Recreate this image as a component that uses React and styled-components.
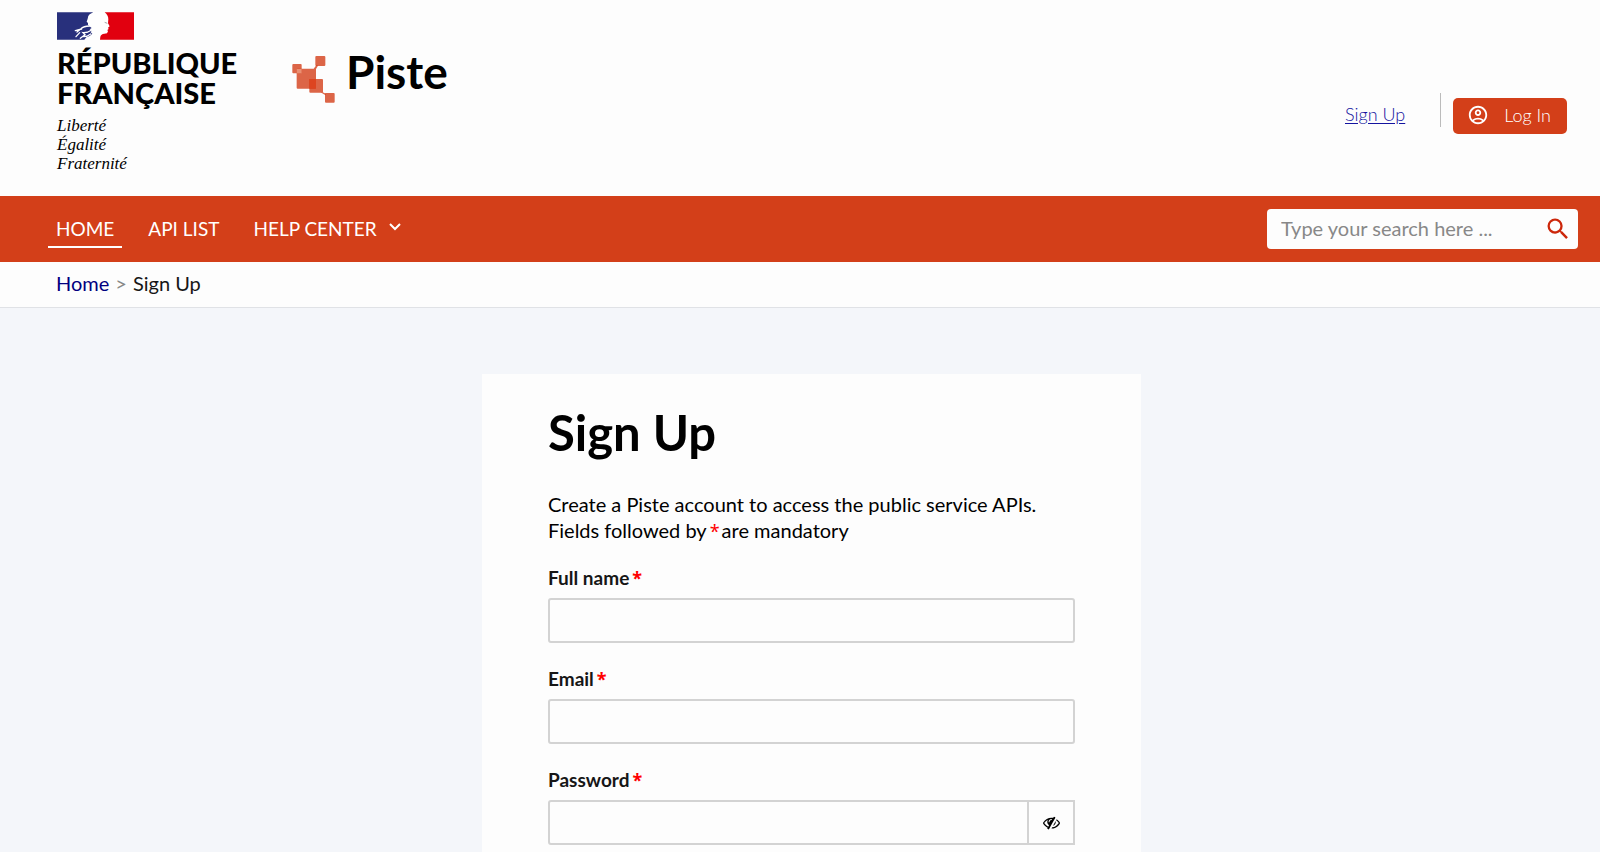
import React from "react";
import styled, { createGlobalStyle } from "styled-components";
import { MdSearch, MdOutlineAccountCircle } from "react-icons/md";

const GlobalStyle = createGlobalStyle`
  * { box-sizing: border-box; }
  body {
    margin: 0;
    background: #f4f6fa;
    color: #000;
    font-family: Lato, "Noto Sans", sans-serif;
    font-size: 20px;
    line-height: 26px;
  }
  input, button { font-family: inherit; font-size: inherit; }
`;

const Header = styled.header`
  display: flex;
  align-items: flex-start;
  height: 196px;
  padding: 12px 33px 0 57px;
  background: #fdfdfd;
`;

const Republic = styled.div`
  width: 235px;
  svg { display: block; }
`;

const RepublicName = styled.div`
  margin-top: 8px;
  font-size: 29px;
  font-weight: 900;
  line-height: 30px;
`;

const Motto = styled.div`
  margin-top: 8px;
  font-family: "Liberation Serif", serif;
  font-size: 17px;
  font-style: italic;
  font-weight: 400;
  line-height: 19px;
`;

const Brand = styled.a`
  display: flex;
  align-items: center;
  gap: 10px;
  margin-top: 29px;
  color: #000;
  font-size: 46px;
  font-weight: 700;
  line-height: 48px;
  text-decoration: none;
  svg { margin-top: 14px; }
`;

const Account = styled.div`
  display: flex;
  align-items: flex-start;
  margin: 81px 0 0 auto;
  font-size: 18px;
  font-weight: 300;
`;

const SignUpLink = styled.a`
  margin-top: 8px;
  padding-right: 35px;
  color: #1414a0;
  text-underline-offset: 2px;
`;

const Divider = styled.span`
  width: 1px;
  height: 34px;
  margin-right: 12px;
  background: #bbb;
`;

const LogIn = styled.button`
  display: flex;
  align-items: center;
  gap: 15px;
  height: 36px;
  margin-top: 5px;
  padding: 0 16px 2px 14px;
  border: 0;
  border-radius: 5px;
  background: #d33f19;
  color: #fff;
  font-weight: 300;
`;

const Nav = styled.nav`
  display: flex;
  align-items: center;
  height: 66px;
  padding: 0 22px 0 48px;
  gap: 18px;
  background: #d33f19;
`;

const NavLink = styled.a`
  display: flex;
  align-items: center;
  gap: 11px;
  height: 38px;
  padding: 1px 8px 0;
  border-bottom: 2px solid ${(p) => (p.$active ? "#fff" : "transparent")};
  color: #fff;
  font-size: 19px;
  text-decoration: none;
  svg { margin-top: -4px; }
`;

const Search = styled.form`
  display: flex;
  align-items: center;
  width: 311px;
  height: 40px;
  margin-left: auto;
  padding: 0 6px 0 14px;
  border-radius: 4px;
  background: #fdfdfd;
`;

const SearchInput = styled.input`
  flex: 1;
  min-width: 0;
  padding: 0 0 2px;
  border: 0;
  outline: 0;
  background: none;
  &::placeholder { color: #888; opacity: 1; }
`;

const IconButton = styled.button`
  display: flex;
  padding: 0;
  border: 0;
  background: none;
  color: #cc260a;
`;

const Breadcrumb = styled.nav`
  display: flex;
  gap: 6px;
  height: 46px;
  padding: 8px 56px;
  border-bottom: 1px solid #e0e2e6;
  background: #fdfdfd;
  color: #161616;
  a { color: #000080; text-decoration: none; }
  span { color: #888; }
`;

const Main = styled.main`
  display: flex;
  justify-content: center;
  padding: 66px 0 0 23px;
`;

const Card = styled.section`
  width: 659px;
  padding: 32px 66px 40px;
  background: #fdfdfd;
`;

const Title = styled.h1`
  margin: 0 0 33px;
  font-size: 49px;
  font-weight: 700;
  line-height: 52px;
`;

const Intro = styled.p`
  margin: 0 0 22px;
`;

const Star = styled.span`
  margin: 0 2px 0 3px;
  color: #f00;
  font-family: "Noto Sans", sans-serif;
  font-size: 18px;
  line-height: 20px;
`;

const Form = styled.form`
  display: flex;
  flex-direction: column;
  gap: 23px;
`;

const Field = styled.div``;

const Label = styled.label`
  display: block;
  height: 26px;
  margin-bottom: 7px;
  color: #161616;
  font-size: 19px;
  font-weight: 700;
`;

const Control = styled.div`
  display: flex;
  height: 45px;
  border: 2px solid #d3d3d3;
  border-radius: ${(p) => (p.$joined ? "3px 0 0 3px" : "3px")};
`;

const TextInput = styled.input`
  flex: 1;
  min-width: 0;
  padding: 0 12px;
  border: 0;
  outline: 0;
  background: none;
`;

const Reveal = styled.button`
  display: flex;
  align-items: center;
  justify-content: center;
  width: 46px;
  padding: 0;
  border: 0;
  border-left: 2px solid #d3d3d3;
  background: none;
`;

const Flag = () => (
  <svg width="77" height="28" viewBox="0 0 231 84" aria-hidden="true">
    <rect width="231" height="84" fill="#fff" />
    <path fill="#28307c" d="M0 1H109L98 7Q91 13 92 20L89 29L93 33L93 38Q98 44 104 48L98 52L104 56L101 61L106 65L98 72L88 76L82 83H0Z" />
    <path fill="none" stroke="#fff" strokeWidth="4" strokeLinecap="round" d="M98 42Q80 42 71 51L60 60M74 51L55 56M68 62L57 74M104 54Q91 63 78 62L84 68L70 79M101 66Q91 74 80 74" />
    <path fill="#e1000f" d="M143 1H231V83H129L130 74Q132 66 142 65L150 64L153 58L151 54L155 51L153 47L158 43L153 34L154 22Q154 10 143 1Z" />
    <path fill="none" stroke="#777" strokeWidth="2" d="M143 31L151 34" />
  </svg>
);

const PisteLogo = () => (
  <svg width="44" height="48" viewBox="0 0 132 144" aria-hidden="true">
    <g fill="#d33f19" fillOpacity="0.8">
      <rect x="1" y="27" width="28" height="28" rx="3" />
      <path d="M17 41H65L74 29L78 32L72 42V98Q72 101 69 101H17Q14 101 14 98V44Q14 41 17 41Z" />
      <rect x="70" y="3" width="30" height="30" rx="3" />
      <rect x="52" y="72" width="41" height="41" rx="3" />
      <path d="M86 112H92L102 116V119H98Z" />
      <rect x="99" y="114" width="29" height="29" rx="3" />
    </g>
    <rect x="14" y="42" width="15" height="13" fill="#e98f73" />
    <rect x="52" y="72" width="20" height="29" fill="#dd4420" />
  </svg>
);

const Chevron = () => (
  <svg width="14" height="10" viewBox="0 0 14 10" aria-hidden="true">
    <path d="M2 2L7 7L12 2" fill="none" stroke="#fff" strokeWidth="2" />
  </svg>
);

const EyeSlash = () => (
  <svg width="17" height="17" viewBox="0 0 1792 1792" aria-hidden="true">
    <path d="M555 1335l78-141q-87-63-136-159t-49-203q0-121 61-225-229 117-381 353 167 258 427 375zm389-759q0-20-14-34t-34-14q-125 0-214.5 89.5t-89.5 214.5q0 20 14 34t34 14 34-14 14-34q0-86 61-147t147-61q20 0 34-14t14-34zm363-191q0 7-1 9-106 189-316 567t-315 566l-49 89q-10 16-28 16-12 0-134-70-16-10-16-28 0-12 44-87-143-65-263.5-173t-208.5-245q-20-31-20-69t20-69q153-235 380-371t496-136q89 0 180 17l54-97q10-16 28-16 5 0 18 6t31 15.5 33 18.5 31.5 18.5 19.5 11.5q16 10 16 27zm37 447q0 139-79 253.5t-209 164.5l280-502q8 45 8 84zm448 128q0 35-20 69-39 64-109 145-150 172-347.5 267t-419.5 95l74-132q212-18 392.5-137t301.5-307q-115-179-282-294l63-112q95 64 182.5 153t144.5 184q20 34 20 69z" />
  </svg>
);

function FormField({ id, label, type = "text", children }) {
  return (
    <Field>
      <Label htmlFor={id}>
        {label}
        <Star>*</Star>
      </Label>
      <Control $joined={Boolean(children)}>
        <TextInput id={id} type={type} required />
        {children}
      </Control>
    </Field>
  );
}

export default function App() {
  return (
    <>
      <GlobalStyle />
      <Header>
        <Republic>
          <Flag />
          <RepublicName>
            RÉPUBLIQUE
            <br />
            FRANÇAISE
          </RepublicName>
          <Motto>
            Liberté
            <br />
            Égalité
            <br />
            Fraternité
          </Motto>
        </Republic>
        <Brand href="#">
          <PisteLogo />
          Piste
        </Brand>
        <Account>
          <SignUpLink href="#">Sign Up</SignUpLink>
          <Divider />
          <LogIn type="button">
            <MdOutlineAccountCircle size={22} />
            Log In
          </LogIn>
        </Account>
      </Header>
      <Nav>
        <NavLink href="#" $active>HOME</NavLink>
        <NavLink href="#">API LIST</NavLink>
        <NavLink href="#">
          HELP CENTER
          <Chevron />
        </NavLink>
        <Search role="search">
          <SearchInput type="text" aria-label="Search" placeholder="Type your search here ..." />
          <IconButton type="button" aria-label="Search">
            <MdSearch size={28} />
          </IconButton>
        </Search>
      </Nav>
      <Breadcrumb aria-label="Breadcrumb">
        <a href="#">Home</a>
        <span>&gt;</span>
        Sign Up
      </Breadcrumb>
      <Main>
        <Card>
          <Title>Sign Up</Title>
          <Intro>
            Create a Piste account to access the public service APIs.
            <br />
            Fields followed by<Star>*</Star>are mandatory
          </Intro>
          <Form>
            <FormField id="name" label="Full name" />
            <FormField id="email" label="Email" type="email" />
            <FormField id="password" label="Password" type="password">
              <Reveal type="button" aria-label="Show password">
                <EyeSlash />
              </Reveal>
            </FormField>
          </Form>
        </Card>
      </Main>
    </>
  );
}
